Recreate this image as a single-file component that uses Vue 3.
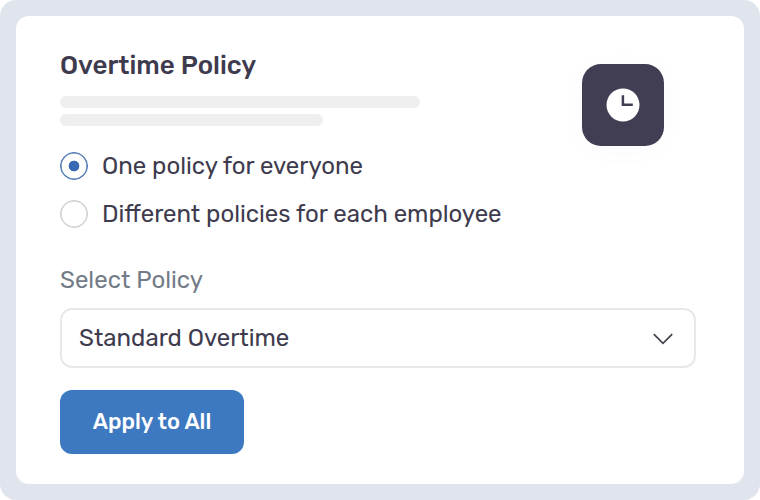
<template>
  <div class="frame">
    <main class="card">
      <header class="header">
        <div class="intro">
          <h2 class="title">Overtime Policy</h2>
          <div class="line"></div>
          <div class="line short"></div>
        </div>
        <div class="clock">
          <svg width="34" height="34" viewBox="0 0 34 34">
            <circle cx="17" cy="17" r="16.5" fill="#fff" />
            <path d="M16.9 7.2V16.8H26.8" fill="none" stroke="#413e54" stroke-width="2.5" />
          </svg>
        </div>
      </header>

      <div class="options">
        <label v-for="item in options" :key="item.value" class="option">
          <input v-model="mode" type="radio" name="mode" :value="item.value" />
          <span class="text">{{ item.label }}</span>
        </label>
      </div>

      <div class="label">Select Policy</div>
      <div class="select">
        <span class="value">{{ policy }}</span>
        <svg width="22" height="14" viewBox="0 0 22 14">
          <path d="M1.8 3.2L11 12.3L20.2 3.2" fill="none" stroke="#46444f" stroke-width="1.8" />
        </svg>
      </div>

      <button class="apply">Apply to All</button>
    </main>
  </div>
</template>

<script setup>
import { ref } from 'vue'

const options = [
  { value: 'single', label: 'One policy for everyone' },
  { value: 'multiple', label: 'Different policies for each employee' }
]
const mode = ref('single')
const policy = ref('Standard Overtime')
</script>

<style>
body {
  margin: 0;
  background: #fff;
}
</style>

<style scoped>
.frame {
  box-sizing: border-box;
  width: 760px;
  height: 500px;
  padding: 16px;
  background: #e0e4ec;
  border-radius: 16px;
  font-family: Rubik, Roboto, sans-serif;
  color: #3e3b4e;
}
.card {
  box-sizing: border-box;
  height: 468px;
  padding: 32px 48px 30px 44px;
  background: #fff;
  border-radius: 13px;
}
.header {
  display: flex;
  justify-content: space-between;
  align-items: flex-start;
  height: 102px;
}
.title {
  margin: 0 0 12px;
  font-size: 26px;
  font-weight: 500;
  line-height: 36px;
}
.line {
  width: 360px;
  height: 12px;
  margin-bottom: 6px;
  border-radius: 6px;
  background: #efefef;
}
.line.short {
  width: 263px;
}
.clock {
  display: flex;
  align-items: center;
  justify-content: center;
  width: 82px;
  height: 82px;
  margin: 16px 32px 0 0;
  border-radius: 19px;
  background: #413e54;
  box-shadow: 0 4px 30px rgba(0, 0, 0, 0.025);
}
.options {
  display: flex;
  flex-direction: column;
  gap: 20px;
  padding-top: 2px;
}
.option {
  display: flex;
  align-items: center;
  gap: 14px;
  height: 28px;
}
.option input {
  appearance: none;
  box-sizing: border-box;
  width: 28px;
  height: 28px;
  margin: 0;
  border: 1px solid #ccc;
  border-radius: 50%;
  box-shadow: inset 0 0 0 0.6px #ccc;
}
.option input:checked {
  border-color: #4470ae;
  box-shadow: inset 0 0 0 0.6px #4470ae;
  background: radial-gradient(circle, #3769b5 5px, transparent 5.7px);
}
.text,
.label,
.value {
  font-size: 24px;
  line-height: 28px;
}
.label {
  margin: 38px 0 14px;
  color: #737b87;
}
.select {
  box-sizing: border-box;
  display: flex;
  align-items: center;
  justify-content: space-between;
  width: 636px;
  height: 60px;
  padding: 0 20px 0 17px;
  border: 2px solid #e8e8e9;
  border-radius: 12px;
}
.apply {
  display: block;
  width: 184px;
  height: 64px;
  margin-top: 22px;
  padding: 0 0 2px;
  border: none;
  border-radius: 12px;
  background: #3d79c0;
  color: #fff;
  font-family: inherit;
  font-size: 22px;
  font-weight: 500;
}
</style>
